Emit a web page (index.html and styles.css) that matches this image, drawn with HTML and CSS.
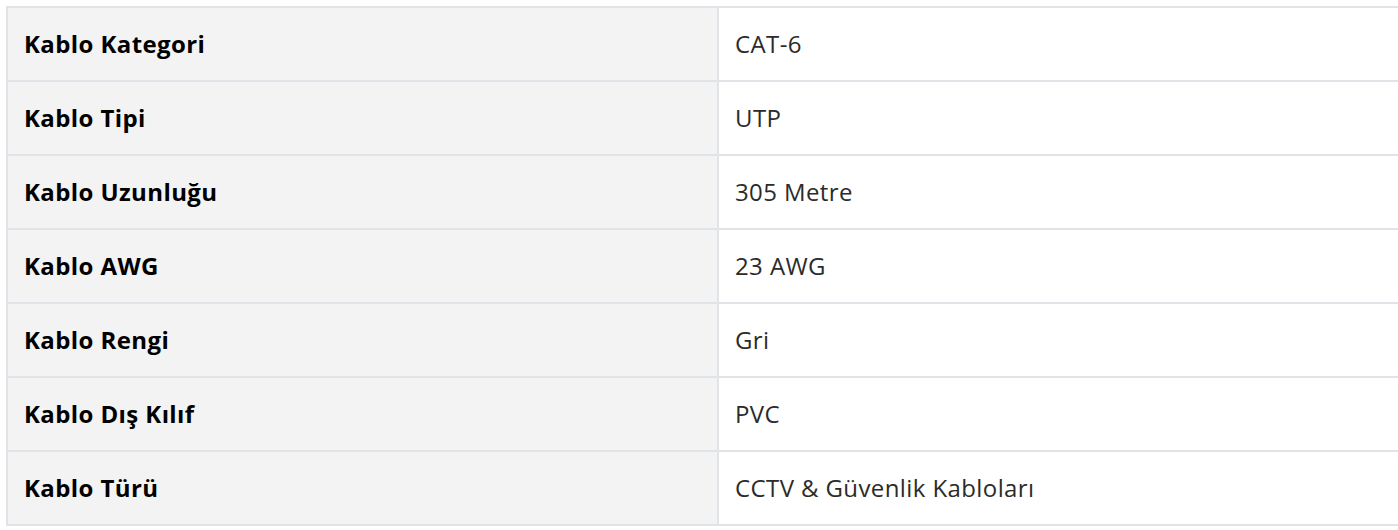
FILE: index.html
```html
<!DOCTYPE html>
<html lang="tr">
<head>
<meta charset="utf-8">
<title>Ürün Özellikleri</title>
<link rel="stylesheet" href="styles.css">
</head>
<body>
<div class="wrap">
<table class="specs">
<tbody>
<tr><th>Kablo Kategori</th><td>CAT-6</td></tr>
<tr><th>Kablo Tipi</th><td>UTP</td></tr>
<tr><th>Kablo Uzunluğu</th><td>305 Metre</td></tr>
<tr><th>Kablo AWG</th><td>23 AWG</td></tr>
<tr><th>Kablo Rengi</th><td>Gri</td></tr>
<tr><th>Kablo Dış Kılıf</th><td>PVC</td></tr>
<tr><th>Kablo Türü</th><td>CCTV &amp; Güvenlik Kabloları</td></tr>
</tbody>
</table>
</div>
</body>
</html>
```
FILE: styles.css
```css
html, body {
  margin: 0;
  background: #ffffff;
  overflow: hidden;
}
.wrap {
  padding: 6px 0 0 6px;
}
.specs {
  border-collapse: collapse;
  width: 1420px;
  table-layout: fixed;
  font-family: "Open Sans", "Noto Sans", sans-serif;
  font-size: 24px;
  letter-spacing: 0.4px;
}
.specs th,
.specs td {
  border: 2px solid #e0e3e7;
  padding: 0 16px 2px;
  text-align: left;
  vertical-align: middle;
  box-sizing: border-box;
  height: 74px;
}
.specs th {
  width: 711px;
  background: #f3f3f3;
  color: #000000;
  font-weight: 700;
}
.specs td {
  background: #ffffff;
  color: #2b2b2b;
  font-weight: 400;
}
```
